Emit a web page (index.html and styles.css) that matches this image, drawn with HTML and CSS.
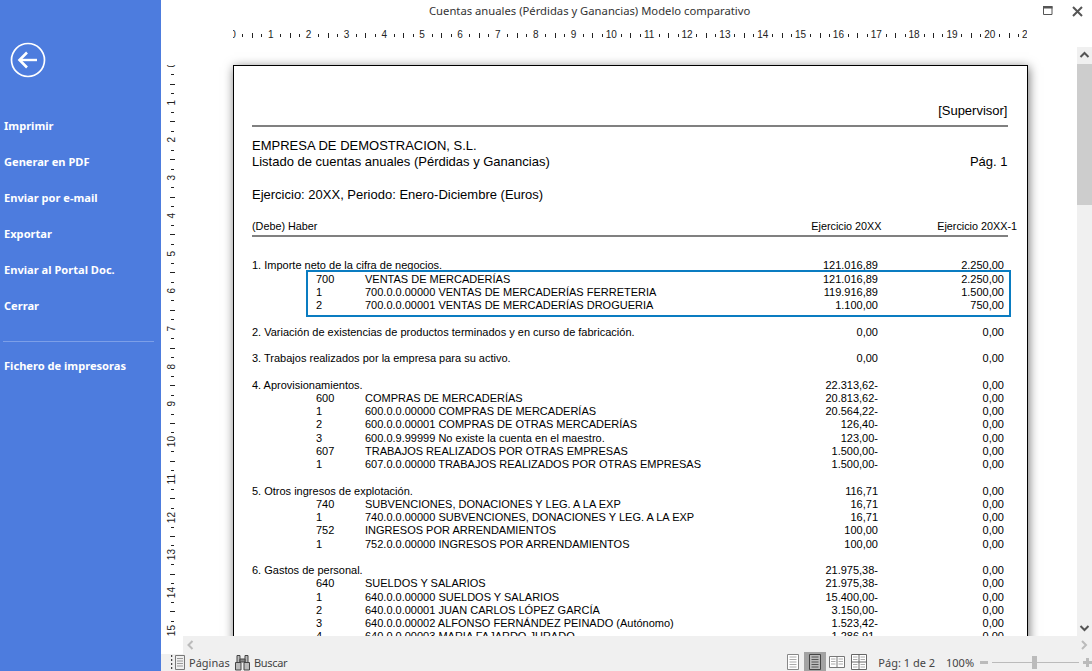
FILE: index.html
```html
<!DOCTYPE html>
<html lang="es">
<head>
<meta charset="utf-8">
<title>Cuentas anuales</title>
<link rel="stylesheet" href="styles.css">
</head>
<body>
<div class="app">
  <aside class="side">
    <svg class="back" width="36" height="36" viewBox="0 0 36 36"><circle cx="18" cy="18" r="16.5" fill="none" stroke="#fff" stroke-width="1.7"/><path d="M10 18H27" stroke="#fff" stroke-width="2.4" fill="none"/><path d="M17 10.5 9.5 18l7.5 7.5" stroke="#fff" stroke-width="2.6" fill="none"/></svg>
    <nav class="nav">
      <a>Imprimir</a>
      <a>Generar en PDF</a>
      <a>Enviar por e-mail</a>
      <a>Exportar</a>
      <a>Enviar al Portal Doc.</a>
      <a>Cerrar</a>
    </nav>
    <div class="side-rule"></div>
    <a class="side-extra">Fichero de impresoras</a>
  </aside>
  <main class="main">
    <header class="titlebar">
      <span class="title">Cuentas anuales (Pérdidas y Ganancias) Modelo comparativo</span>
      <span class="win-btns">
        <svg width="10" height="10" viewBox="0 0 10 10"><path d="M.5 .5h8.5v8h-8.5z" fill="none" stroke="#555"/><path d="M0 0h9.5v2.500h-9.500z" fill="#555"/></svg>
        <svg width="11" height="11" viewBox="0 0 11 11"><path d="M1 1l9 9M10 1l-9 9" stroke="#555" stroke-width="2" fill="none"/></svg>
      </span>
    </header>
    <div class="hruler">
      <div class="hruler-in">
        <span>0</span><span>1</span><span>2</span><span>3</span><span>4</span><span>5</span><span>6</span><span>7</span><span>8</span><span>9</span><span>10</span><span>11</span><span>12</span><span>13</span><span>14</span><span>15</span><span>16</span><span>17</span><span>18</span><span>19</span><span>20</span><span>21</span>
      </div>
    </div>
    <div class="work">
      <div class="vruler">
        <div class="vruler-in">
          <span><b>0</b></span><span><b>1</b></span><span><b>2</b></span><span><b>3</b></span><span><b>4</b></span><span><b>5</b></span><span><b>6</b></span><span><b>7</b></span><span><b>8</b></span><span><b>9</b></span><span><b>10</b></span><span><b>11</b></span><span><b>12</b></span><span><b>13</b></span><span><b>14</b></span><span><b>15</b></span>
        </div>
      </div>
      <div class="viewer">
        <article class="page">
          <div class="supervisor">[Supervisor]</div>
          <div class="rule"></div>
          <div class="line company">EMPRESA DE DEMOSTRACION, S.L.</div>
          <div class="line split"><span>Listado de cuentas anuales (Pérdidas y Ganancias)</span><span>Pág. 1</span></div>
          <div class="line period">Ejercicio: 20XX, Periodo: Enero-Diciembre (Euros)</div>
          <div class="head"><span class="head-l">(Debe) Haber</span><span class="head-a">Ejercicio 20XX</span><span class="head-b">Ejercicio 20XX-1</span></div>
          <div class="rule rule-b"></div>
          <div class="rows">
            <div class="row"><span class="sec">1. Importe neto de la cifra de negocios.</span><span class="n">121.016,89</span><span class="n">2.250,00</span></div>
            <div class="hl">
              <div class="row"><span>700</span><span class="d">VENTAS DE MERCADERÍAS</span><span class="n">121.016,89</span><span class="n">2.250,00</span></div>
              <div class="row"><span>1</span><span class="d">700.0.0.00000 VENTAS DE MERCADERÍAS FERRETERIA</span><span class="n">119.916,89</span><span class="n">1.500,00</span></div>
              <div class="row"><span>2</span><span class="d">700.0.0.00001 VENTAS DE MERCADERÍAS DROGUERIA</span><span class="n">1.100,00</span><span class="n">750,00</span></div>
            </div>
            <div class="row gap"></div>
            <div class="row"><span class="sec">2. Variación de existencias de productos terminados y en curso de fabricación.</span><span class="n">0,00</span><span class="n">0,00</span></div>
            <div class="row gap"></div>
            <div class="row"><span class="sec">3. Trabajos realizados por la empresa para su activo.</span><span class="n">0,00</span><span class="n">0,00</span></div>
            <div class="row gap"></div>
            <div class="row"><span class="sec">4. Aprovisionamientos.</span><span class="n">22.313,62-</span><span class="n">0,00</span></div>
            <div class="row"><span>600</span><span class="d">COMPRAS DE MERCADERÍAS</span><span class="n">20.813,62-</span><span class="n">0,00</span></div>
            <div class="row"><span>1</span><span class="d">600.0.0.00000 COMPRAS DE MERCADERÍAS</span><span class="n">20.564,22-</span><span class="n">0,00</span></div>
            <div class="row"><span>2</span><span class="d">600.0.0.00001 COMPRAS DE OTRAS MERCADERÍAS</span><span class="n">126,40-</span><span class="n">0,00</span></div>
            <div class="row"><span>3</span><span class="d">600.0.9.99999 No existe la cuenta en el maestro.</span><span class="n">123,00-</span><span class="n">0,00</span></div>
            <div class="row"><span>607</span><span class="d">TRABAJOS REALIZADOS POR OTRAS EMPRESAS</span><span class="n">1.500,00-</span><span class="n">0,00</span></div>
            <div class="row"><span>1</span><span class="d">607.0.0.00000 TRABAJOS REALIZADOS POR OTRAS EMPRESAS</span><span class="n">1.500,00-</span><span class="n">0,00</span></div>
            <div class="row gap"></div>
            <div class="row"><span class="sec">5. Otros ingresos de explotación.</span><span class="n">116,71</span><span class="n">0,00</span></div>
            <div class="row"><span>740</span><span class="d">SUBVENCIONES, DONACIONES Y LEG. A LA EXP</span><span class="n">16,71</span><span class="n">0,00</span></div>
            <div class="row"><span>1</span><span class="d">740.0.0.00000 SUBVENCIONES, DONACIONES Y LEG. A LA EXP</span><span class="n">16,71</span><span class="n">0,00</span></div>
            <div class="row"><span>752</span><span class="d">INGRESOS POR ARRENDAMIENTOS</span><span class="n">100,00</span><span class="n">0,00</span></div>
            <div class="row"><span>1</span><span class="d">752.0.0.00000 INGRESOS POR ARRENDAMIENTOS</span><span class="n">100,00</span><span class="n">0,00</span></div>
            <div class="row gap"></div>
            <div class="row"><span class="sec">6. Gastos de personal.</span><span class="n">21.975,38-</span><span class="n">0,00</span></div>
            <div class="row"><span>640</span><span class="d">SUELDOS Y SALARIOS</span><span class="n">21.975,38-</span><span class="n">0,00</span></div>
            <div class="row"><span>1</span><span class="d">640.0.0.00000 SUELDOS Y SALARIOS</span><span class="n">15.400,00-</span><span class="n">0,00</span></div>
            <div class="row"><span>2</span><span class="d">640.0.0.00001 JUAN CARLOS LÓPEZ GARCÍA</span><span class="n">3.150,00-</span><span class="n">0,00</span></div>
            <div class="row"><span>3</span><span class="d">640.0.0.00002 ALFONSO FERNÁNDEZ PEINADO (Autónomo)</span><span class="n">1.523,42-</span><span class="n">0,00</span></div>
            <div class="row"><span>4</span><span class="d">640.0.0.00003 MARIA FAJARDO JURADO</span><span class="n">1.286,91-</span><span class="n">0,00</span></div>
          </div>
        </article>
      </div>
      <div class="vscroll">
        <svg class="arrow" width="15" height="17" viewBox="0 0 15 17"><path d="M3.500 10 7.500 6l4 4" fill="none" stroke="#555" stroke-width="2"/></svg>
        <div class="thumb"></div>
        <div class="track"></div>
        <svg class="arrow" width="15" height="17" viewBox="0 0 15 17"><path d="M3.500 7l4 4 4-4" fill="none" stroke="#555" stroke-width="2"/></svg>
      </div>
    </div>
    <div class="hscroll">
      <svg width="16" height="18" viewBox="0 0 16 18"><path d="M9.500 5 5.500 9l4 4" fill="none" stroke="#bbb" stroke-width="2"/></svg>
      <svg width="16" height="18" viewBox="0 0 16 18"><path d="M6 5l4 4-4 4" fill="none" stroke="#bbb" stroke-width="2"/></svg>
    </div>
    <footer class="status">
      <svg class="st-pages" width="15" height="17" viewBox="0 0 15 17"><path d="M.5 1v2M.5 5v2M.5 9v2M.5 13v2" stroke="#444" stroke-width="1.500" fill="none"/><path d="M4.500 1.500h9v14h-9z" fill="none" stroke="#777"/><path d="M6 4.500h6M6 7h6M6 9.500h6M6 12h6" stroke="#999" fill="none"/></svg>
      <span class="st-txt st-pg">Páginas</span>
      <svg class="st-bin" width="17" height="17" viewBox="0 0 17 17"><path d="M1.500 8.500h5.500v7.500h-5.500zM10 8.500h5.500v7.500h-5.500z" fill="#bbb" stroke="#444"/><path d="M3 1.500h3v7h-3zM11 1.500h3v7h-3z" fill="#bbb" stroke="#444"/><path d="M6 5h5v3h-5z" fill="#888" stroke="#444"/></svg>
      <span class="st-txt st-find">Buscar</span>
      <span class="st-views">
        <span class="view"><svg width="12" height="16" viewBox="0 0 12 16"><path d="M.5 .5h11v15h-11z" fill="#fff" stroke="#888"/><path d="M2.500 3h7M2.500 5.500h7M2.500 8h7M2.500 10.500h7M2.500 13h7" stroke="#aaa"/></svg></span>
        <span class="view on"><svg width="12" height="16" viewBox="0 0 12 16"><path d="M.5 .5h11v15h-11z" fill="#bbb" stroke="#444"/><path d="M2.500 3h7M2.500 5.500h7M2.500 8h7M2.500 10.500h7M2.500 13h7" stroke="#555"/></svg></span>
        <span class="view"><svg width="16" height="12" viewBox="0 0 16 12"><path d="M.5 .5h15v11h-15zM8 .5v11" fill="#fff" stroke="#777"/><path d="M2 3h4.500M2 5.500h4.500M2 8h4.500M9.500 3h4.500M9.500 5.500h4.500M9.500 8h4.500" stroke="#aaa"/></svg></span>
        <span class="view"><svg width="16" height="16" viewBox="0 0 16 16"><path d="M.5 .5h15v15h-15zM8 .5v15M.5 8h15" fill="#fff" stroke="#666"/><path d="M2 3h4.500M2 5.500h4.500M9.500 3h4.500M9.500 5.500h4.500M2 10.500h4.500M2 13h4.500M9.500 10.500h4.500M9.500 13h4.500" stroke="#aaa"/></svg></span>
      </span>
      <span class="st-txt st-page">Pág: 1 de 2</span>
      <span class="st-txt st-zoom">100%</span>
      <span class="zoom-min"></span>
      <span class="slider"><i></i></span>
      <svg class="zoom-plus" width="9" height="9" viewBox="0 0 9 9"><path d="M4.500 0v9M0 4.500h9" stroke="#bbb" stroke-width="3"/></svg>
    </footer>
  </main>
</div>
</body>
</html>
```
FILE: styles.css
```css
* { box-sizing: border-box; }
html, body { margin: 0; height: 100%; overflow: hidden; background: #fff; }
.app { display: flex; width: 1092px; height: 671px; }

.side { width: 161px; flex: none; background: #4d7cde; padding-top: 42px; color: #fff; font: 700 11.1px "Noto Sans", sans-serif; }
.back { display: block; margin-left: 10px; }
.nav { display: flex; flex-direction: column; margin-top: 30px; }
.nav a { height: 36px; line-height: 36px; padding-left: 4px; }
.side-rule { height: 1px; margin: 17px 7px 0 3px; background: #7c9fe8; }
.side-extra { display: block; height: 36px; line-height: 36px; padding-left: 4px; margin-top: 6px; }

.main { flex: 1; min-width: 0; display: flex; flex-direction: column; }
.titlebar { height: 22px; display: flex; align-items: center; padding-left: 268px; font: 11.25px/22px "Noto Sans", sans-serif; color: #333; flex: none; }
.win-btns { margin-left: auto; display: flex; align-items: center; gap: 19px; padding-right: 9px; }

.hruler { height: 25px; flex: none; margin-left: 72px; width: 794px; overflow: hidden; padding-top: 7px; }
.hruler-in { display: flex; margin-left: -19px; width: 840px; height: 12px; }
.hruler-in span { flex: 0 0 37.85px; height: 12px; text-align: center; font: 10px/12px "Liberation Sans", sans-serif; color: #222;
  background:
    linear-gradient(#222, #222) 0 center / 1px 5px no-repeat,
    linear-gradient(#222, #222) 9.450px center / 1px 3px no-repeat,
    linear-gradient(#222, #222) 28.350px center / 1px 3px no-repeat; }

.work { flex: 1; min-height: 0; display: flex; }
.vruler { width: 22px; flex: none; overflow: hidden; margin-top: 18px; }
.vruler-in { display: flex; flex-direction: column; margin-top: -19px; padding-left: 5px; }
.vruler-in span { flex: 0 0 37.7px; height: 37.7px; width: 12px; display: flex; align-items: center; justify-content: center;
  background:
    linear-gradient(#222, #222) center 0 / 5px 1px no-repeat,
    linear-gradient(#222, #222) center 9.450px / 3px 1px no-repeat,
    linear-gradient(#222, #222) center 28.350px / 3px 1px no-repeat; }
.vruler-in b { writing-mode: vertical-rl; transform: rotate(180deg); font: 10px/12px "Liberation Sans", sans-serif; color: #222; }

.viewer { flex: 1; min-width: 0; overflow: hidden; padding: 18px 49px 0 50px; }
.page { width: 795px; height: 900px; border: 1.500px solid #000; background: #fff; box-shadow: 1px 2px 10px rgba(0,0,0,.55); padding: 38px 19.500px 0 18px; font-family: "Liberation Sans", sans-serif; color: #000; }
.supervisor { height: 14px; font-size: 13px; line-height: 14px; text-align: right; }
.rule { height: 2px; margin-top: 7px; background: #808080; }
.line { font-size: 13px; line-height: 16px; }
.company { margin-top: 11px; }
.split { display: flex; justify-content: space-between; }
.period { margin-top: 17px; }
.head { margin-top: 16px; height: 14px; display: grid; grid-template-columns: 1fr 130px 135px; margin-right: -9.500px; font-size: 10.800px; line-height: 14px; }
.head-a, .head-b { text-align: right; }
.head-a { margin-right: 0.500px; }
.rule-b { margin-top: 2px; }

.rows { margin-top: 22.400px; width: 752px; font-size: 11px; }
.row { display: grid; grid-template-columns: 64px 49px 413px 100px 126px; height: 13.250px; line-height: 13.250px; white-space: nowrap; }
.row > span:first-child { grid-column: 2; }
.row > span.sec:first-child { grid-column: 1 / 4; }
.row > .n { text-align: right; }
.row.gap { display: block; }
.hl { position: relative; }
.hl::after { content: ""; position: absolute; left: 54px; right: -7px; top: -3px; bottom: -5px; border: 2px solid #0a7cc1; pointer-events: none; }

.vscroll { width: 15px; flex: none; display: flex; flex-direction: column; background: #f0f0f0; }
.vscroll .arrow { flex: none; display: block; }
.thumb { height: 141px; flex: none; background: #cdcdcd; }
.track { flex: 1; }

.hscroll { height: 18px; flex: none; margin-left: 22px; background: #f0f0f0; display: flex; justify-content: space-between; }
.status { height: 17px; flex: none; background: #f0f0f0; display: flex; align-items: center; color: #444; }
.st-txt { font: 11px/17px "Noto Sans", sans-serif; white-space: nowrap; }
.st-pages { margin-left: 10px; }
.st-pg { margin-left: 3px; width: 44px; }
.st-bin { margin-left: 1px; }
.st-find { margin-left: 3px; letter-spacing: -.3px; }
.st-views { display: flex; align-self: flex-end; margin-left: 495px; }
.view { height: 19px; width: 22px; display: flex; align-items: center; justify-content: center; }
.view.on { background: #a3a3a3; }
.st-page { margin-left: 8px; }
.st-zoom { margin-left: 11px; }
.zoom-min { width: 8px; height: 3px; margin-left: 6px; background: #bbb; }
.slider { width: 87px; height: 1px; margin-left: 4px; background: #bbb; position: relative; }
.slider i { position: absolute; left: 40px; top: -6px; width: 5px; height: 13px; background: #bbb; }
.zoom-plus { margin-left: 4px; }
```
